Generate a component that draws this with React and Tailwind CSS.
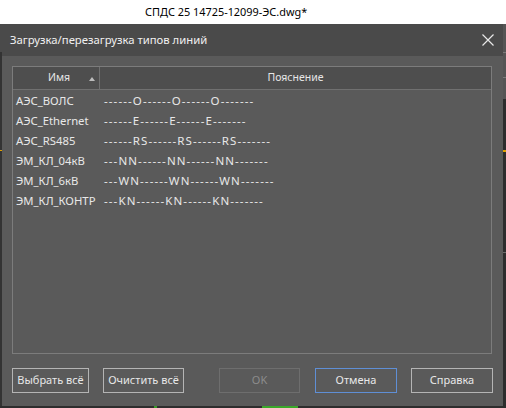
import React from "react";

const rows = [
  ["АЭС_ВОЛС", "------O------O------O-------"],
  ["АЭС_Ethernet", "------E------E------E-------"],
  ["АЭС_RS485", "------RS------RS------RS-------"],
  ["ЭМ_КЛ_04кВ", "---NN------NN------NN-------"],
  ["ЭМ_КЛ_6кВ", "---WN------WN------WN-------"],
  ["ЭМ_КЛ_КОНТР", "---KN------KN------KN-------"],
];

function Btn({ children, w, cls = "" }) {
  return (
    <div
      className={`h-[25px] flex items-center justify-center border text-[11px] ${w} ${cls}`}
    >
      {children}
    </div>
  );
}

export default function App() {
  return (
    <div
      className="w-[506px] h-[408px] bg-white overflow-hidden flex flex-col"
      style={{ fontFamily: '"Noto Sans", "Open Sans", sans-serif' }}
    >
      <div className="h-[24px] flex items-center pl-[145px] text-[10.9px] text-black">
        СПДС 25 14725-12099-ЭС.dwg*
      </div>
      <div className="flex h-[382px]">
        <div className="w-[2px] bg-[#333333] flex flex-col">
          <div className="h-[28px] bg-[#4a4a4a]" />
          <div className="h-[98px]" />
          <div className="h-[1px] bg-[#e0a000]" />
        </div>
        <div className="w-[501px] bg-[#5a5a5a] flex flex-col">
          <div className="h-[32px] bg-[#4a4a4a] flex items-center justify-between pl-[8px] pr-[9px] text-[11.3px] text-[#f0f0f0]">
            <span>Загрузка/перезагрузка типов линий</span>
            <svg width="12" height="12" viewBox="0 0 12 12">
              <path d="M0.5 0.5 L11.5 11.5 M11.5 0.5 L0.5 11.5" stroke="#e8e8e8" strokeWidth="1.2" />
            </svg>
          </div>
          <div className="px-[10px] pt-[10px]">
            <div className="w-[480px] h-[288px] border border-[#7c7c7c] flex flex-col">
              <div className="h-[23px] bg-[#4e4e4e] border-b border-[#707070] flex text-[10.5px] text-[#e6e6e6]">
                <div className="w-[87px] border-r border-[#707070] flex items-center relative">
                  <span className="pl-[35px]">Имя</span>
                  <svg className="absolute left-[76px] top-[10px]" width="6" height="4" viewBox="0 0 6 4">
                    <path d="M0 4 L3 0 L6 4 Z" fill="#bdbdbd" />
                  </svg>
                </div>
                <div className="flex-1 flex items-center justify-center">Пояснение</div>
              </div>
              <div className="pt-[1px] flex flex-col text-[#e8e8e8]">
                {rows.map(([n, d]) => (
                  <div key={n} className="h-[20px] flex items-center">
                    <div className="w-[88px] pl-[3px] whitespace-nowrap text-[11.3px]">{n}</div>
                    <div className="pl-[3px] whitespace-nowrap text-[11.5px] tracking-[1.1px]">{d}</div>
                  </div>
                ))}
              </div>
            </div>
          </div>
          <div className="flex px-[10px] pt-[14px] text-[#e8e8e8]">
            <Btn w="w-[77px]" cls="border-[#b4b4b4]">Выбрать всё</Btn>
            <Btn w="w-[81px] ml-[14px]" cls="border-[#b4b4b4]">Очистить всё</Btn>
            <Btn w="w-[81px] ml-[35px]" cls="border-[#6e6e6e] text-[#8c8c8c]">OK</Btn>
            <Btn w="w-[82px] ml-[15px]" cls="border-[#5f8fd6]">Отмена</Btn>
            <Btn w="w-[82px] ml-[14px]" cls="border-[#b4b4b4]">Справка</Btn>
          </div>
        </div>
        <div className="w-[3px] bg-[#2d2d2d] flex flex-col">
          <div className="h-[75px] bg-[#555555] flex flex-col">
            <div className="h-[28px]" />
            <div className="h-[1px] bg-[#7a7a7a]" />
            <div className="h-[24px]" />
            <div className="h-[1px] bg-[#7a7a7a]" />
          </div>
          <div className="h-[51px]" />
          <div className="h-[2px] bg-[#e0a000]" />
          <div className="h-[100px]" />
          <div className="h-[1px] bg-[#6a6a6a]" />
        </div>
      </div>
      <div className="h-[2px] bg-[#2d2d2d] flex">
        <div className="w-[154px]" />
        <div className="w-[3px] bg-[#3a9a2a]" />
        <div className="w-[105px]" />
        <div className="w-[36px] bg-[#3aa82a]" />
      </div>
    </div>
  );
}
